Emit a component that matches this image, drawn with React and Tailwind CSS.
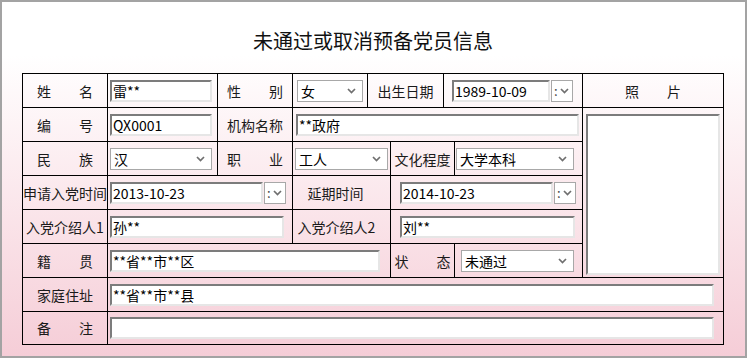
import React from 'react'

const font = { fontFamily: '"Noto Sans CJK SC", "Noto Sans", sans-serif' }

function Chevron() {
  return (
    <svg width="9" height="6" viewBox="0 0 9 6" className="shrink-0">
      <polyline points="1,1 4.5,4.5 8,1" fill="none" stroke="#6f6f6f" strokeWidth="1.7" />
    </svg>
  )
}

function Cell({ className = '', children }) {
  return (
    <div className={`flex items-center border-r border-b border-black ${className}`}>
      {children}
    </div>
  )
}

// 两字标签撑满四字宽度
function Spread({ text }) {
  return (
    <span className="flex w-[56px] justify-between">
      {[...text].map((c, i) => (
        <span key={i}>{c}</span>
      ))}
    </span>
  )
}

function TextBox({ value = '', className = '' }) {
  return (
    <div
      className={`flex h-[22px] items-center border-2 border-t-[#7c7c7c] border-l-[#7c7c7c] border-b-[#e6e6e6] border-r-[#e6e6e6] bg-white pl-[1px] text-[14px] leading-none text-black ${className}`}
    >
      {value}
    </div>
  )
}

function Select({ value, className = '' }) {
  return (
    <div
      className={`flex h-[22px] items-center justify-between border border-[#a8a8a8] bg-white pl-[3px] pr-[6px] text-[14px] leading-none text-black ${className}`}
    >
      <span>{value}</span>
      <Chevron />
    </div>
  )
}

function DateBox({ value, boxClass, className = '' }) {
  return (
    <div className={`flex items-center gap-[1px] ${className}`}>
      <TextBox value={value} className={boxClass} />
      <div className="flex h-[22px] w-[22px] items-center gap-[2px] border border-[#a8a8a8] bg-white pl-[2px] text-[13px] leading-none text-[#444]">
        <span>:</span>
        <Chevron />
      </div>
    </div>
  )
}

export default function App() {
  return (
    <div className="h-[360px] w-[750px] bg-white" style={font}>
      <div className="h-[358px] w-[747px] border-2 border-[#a3a3a3] bg-linear-to-b from-white from-15% to-[#f5cdd7] pl-[20px]">
        <div className="flex h-[71px] w-[702px] items-center justify-center pt-[6px] text-[20px] text-[#111]">
          未通过或取消预备党员信息
        </div>

        <div className="grid w-[702px] grid-cols-[85px_110px_75px_75px_23px_53px_11px_128px_141px] grid-rows-[repeat(7,34px)_33px] border-l border-t border-black text-[14px] leading-none text-[#1a1a1a]">
          {/* 第一行 */}
          <Cell className="justify-center"><Spread text="姓名" /></Cell>
          <Cell><TextBox value="雷**" className="ml-[2px] w-[102px]" /></Cell>
          <Cell className="justify-center"><Spread text="性别" /></Cell>
          <Cell><Select value="女" className="ml-[4px] w-[66px]" /></Cell>
          <Cell className="col-span-2 justify-center">出生日期</Cell>
          <Cell className="col-span-2">
            <DateBox value="1989-10-09" boxClass="w-[98px]" className="ml-[8px]" />
          </Cell>
          <Cell className="justify-center"><Spread text="照片" /></Cell>

          {/* 照片 */}
          <Cell className="col-start-9 row-span-5 row-start-2 items-start">
            <div className="ml-[3px] mt-[6px] h-[161px] w-[134px] border-2 border-t-[#7c7c7c] border-l-[#7c7c7c] border-b-[#e6e6e6] border-r-[#e6e6e6] bg-white" />
          </Cell>

          {/* 第二行 */}
          <Cell className="justify-center"><Spread text="编号" /></Cell>
          <Cell><TextBox value="QX0001" className="ml-[2px] w-[102px]" /></Cell>
          <Cell className="justify-center">机构名称</Cell>
          <Cell className="col-span-5"><TextBox value="**政府" className="ml-[3px] w-[283px]" /></Cell>

          {/* 第三行 */}
          <Cell className="justify-center"><Spread text="民族" /></Cell>
          <Cell><Select value="汉" className="ml-[2px] w-[102px]" /></Cell>
          <Cell className="justify-center"><Spread text="职业" /></Cell>
          <Cell className="col-span-2"><Select value="工人" className="ml-[2px] w-[93px]" /></Cell>
          <Cell className="col-span-2 justify-center">文化程度</Cell>
          <Cell><Select value="大学本科" className="ml-[1px] w-[118px]" /></Cell>

          {/* 第四行 */}
          <Cell className="justify-center">申请入党时间</Cell>
          <Cell className="col-span-2">
            <DateBox value="2013-10-23" boxClass="w-[153px]" className="ml-[2px]" />
          </Cell>
          <Cell className="col-span-2 justify-center pr-[12px]">延期时间</Cell>
          <Cell className="col-span-3">
            <DateBox value="2014-10-23" boxClass="w-[153px]" className="ml-[9px]" />
          </Cell>

          {/* 第五行 */}
          <Cell className="justify-center">入党介绍人1</Cell>
          <Cell className="col-span-2"><TextBox value="孙**" className="ml-[2px] w-[174px]" /></Cell>
          <Cell className="col-span-2 justify-center pr-[10px]">入党介绍人2</Cell>
          <Cell className="col-span-3"><TextBox value="刘**" className="ml-[9px] w-[175px]" /></Cell>

          {/* 第六行 */}
          <Cell className="justify-center"><Spread text="籍贯" /></Cell>
          <Cell className="col-span-4"><TextBox value="**省**市**区" className="ml-[2px] w-[270px]" /></Cell>
          <Cell className="col-span-2 justify-center"><Spread text="状态" /></Cell>
          <Cell><Select value="未通过" className="ml-[6px] w-[113px]" /></Cell>

          {/* 第七、八行 */}
          <Cell className="justify-center">家庭住址</Cell>
          <Cell className="col-span-8"><TextBox value="**省**市**县" className="ml-[2px] w-[604px]" /></Cell>
          <Cell className="justify-center"><Spread text="备注" /></Cell>
          <Cell className="col-span-8"><TextBox className="ml-[2px] w-[604px]" /></Cell>
        </div>
      </div>
    </div>
  )
}
